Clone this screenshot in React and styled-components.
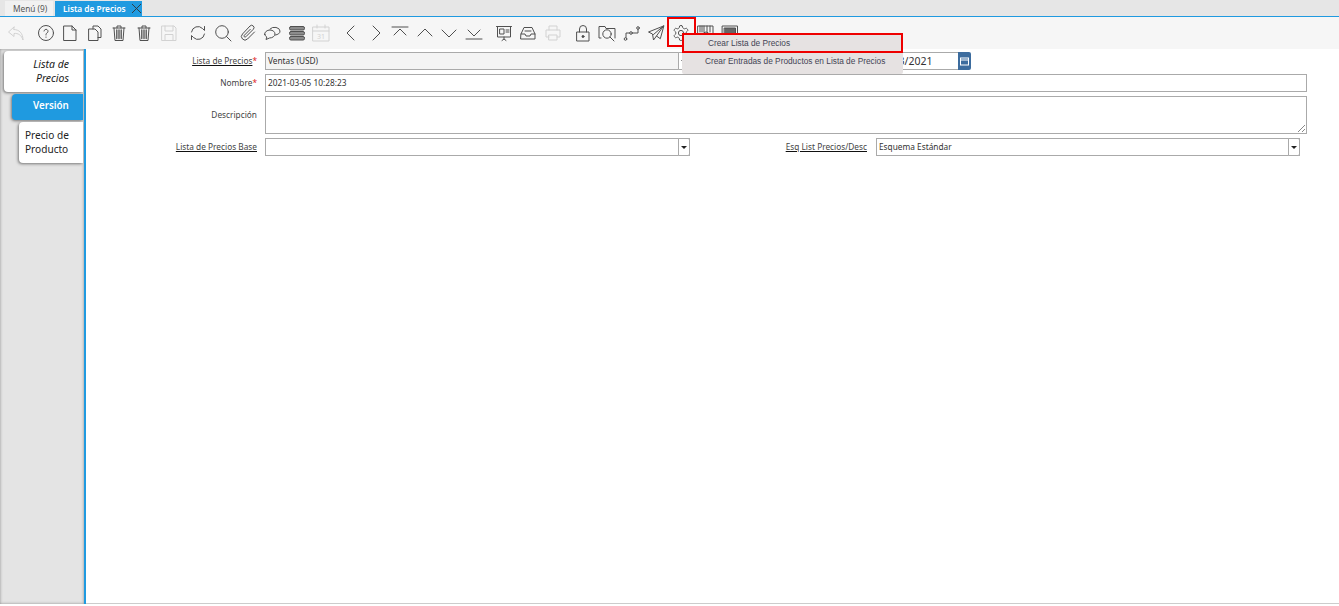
import React from "react";
import styled, { createGlobalStyle } from "styled-components";

const Global = createGlobalStyle`
  html, body { margin: 0; padding: 0; background: #fff; overflow: hidden; }
  body { font-family: "Noto Sans", "Open Sans", sans-serif; }
`;

const Page = styled.div`
  width: 1339px; height: 606px; display: flex; flex-direction: column; position: relative; overflow: hidden; background: #fff;
`;
const TabBar = styled.div`
  height: 16px; background: #e6e6e6; border-bottom: 1px solid #1f9ae0; display: flex; align-items: flex-end; padding-left: 5px; gap: 2px; flex: none;
`;
const Tab = styled.div`
  height: 15px; box-sizing: border-box; display: flex; align-items: center; font-size: 8.3px; line-height: 15px; white-space: nowrap;
  padding-left: 8px;
  width: ${p => (p.$active ? "87px" : "48px")};
  background: ${p => (p.$active ? "#1f9ae0" : "#f1f1f1")};
  color: ${p => (p.$active ? "#fff" : "#555")};
  font-weight: ${p => (p.$active ? 600 : 400)};
  justify-content: space-between;
`;
const Toolbar = styled.div`
  height: 32px; background: #f6f6f6; flex: none; display: flex; align-items: center; gap: 11.7px; padding-left: 7px;
`;
const ToolGroup = styled.div`
  display: flex; align-items: center; gap: 6.6px;
`;
const ToolIcon = styled.svg`
  width: 18px; height: 18px; flex: none; fill: none; stroke: ${p => (p.$off ? "#d2d2d2" : "#505050")}; stroke-width: 1;
  stroke-linecap: round; stroke-linejoin: round;
`;
const Body = styled.div`
  flex: 1; display: flex; min-height: 0; padding-bottom: 2px;
`;
const Side = styled.div`
  width: 84px; box-sizing: border-box; flex: none; background: #e4e4e4; box-shadow: inset 0 0 3px #8c8c8c;
  padding-top: 2px; display: flex; flex-direction: column; gap: 2px; align-items: flex-end;
`;
const SideTab = styled.div`
  box-sizing: border-box; background: ${p => (p.$on ? "#1f9ae0" : "#fff")}; color: ${p => (p.$on ? "#fff" : "#222")};
  width: ${p => p.$w}px; height: ${p => p.$h}px; border-radius: 4px 0 0 4px; line-height: 14px;
  font-size: ${p => (p.$i ? "10.5px" : p.$on ? "9.8px" : "10.1px")};
  margin-right: 1px;
  font-style: ${p => (p.$i ? "italic" : "normal")}; font-weight: ${p => (p.$on ? 600 : 400)};
  padding: ${p => p.$pad}; text-align: ${p => p.$align || "left"};
  box-shadow: -1px 1px 3px #777; flex: none;
`;
const Accent = styled.div` width: 2px; background: #1f9ae0; flex: none; `;
const Form = styled.div`
  flex: 1; display: grid; grid-template-columns: 171px 425px 186px 424px 7px; grid-auto-rows: min-content; padding: 3px 32px 0 8px;
  border-bottom: 1px solid #ccc; align-content: start;
`;
const Label = styled.div`
  font-size: 8.3px; color: #444; text-align: right; padding-right: ${p => p.$pr ?? 8}px; line-height: 17px; white-space: nowrap; align-self: center;
  margin-bottom: 5px;
  & u { text-decoration-color: #111; }
  & b { color: #d22; font-weight: 400; }
`;
const Field = styled.div`
  box-sizing: border-box; height: ${p => p.$h || 18}px; border: 1px solid #aaa; background: ${p => (p.$gray ? "#f4f4f4" : "#fff")};
  font-size: 8.3px; line-height: 16px; padding-left: 2px; color: #333; position: relative; grid-column: ${p => p.$span || "auto"};
  margin-bottom: 4px;
`;
const Arrow = styled.div`
  position: absolute; right: -1px; top: -1px; bottom: -1px; width: 12px; box-sizing: border-box; border: 1px solid #aaa; border-radius: 0 2px 2px 0; background: #fff;
  display: flex; align-items: center; justify-content: center;
  &::after { content: ""; border: 3px solid transparent; border-top: 3px solid #222; border-bottom: 0; }
`;
const Grip = styled.svg` position: absolute; right: 1px; bottom: 1px; width: 7px; height: 7px; stroke: #555; stroke-width: .7; `;
const DateRow = styled.div`
  display: flex; grid-column: 4 / span 2; height: 18px;
`;
const DateField = styled.div`
  box-sizing: border-box; width: 82px; height: 18px; border: 1px solid #aaa; border-right: 0; font-size: 10.5px; line-height: 17px; padding-left: 21.5px; color: #333; background: #fff;
`;
const CalBtn = styled.div`
  width: 13px; height: 18px; background: #3c6c9e; border-radius: 0 2px 2px 0; display: flex; align-items: center; justify-content: center;
`;
const Menu = styled.div`
  position: absolute; left: 682px; top: 33px; width: 221px; height: 41px; background: #e6e2e2; z-index: 3; border-radius: 0 0 2px 2px;
  font-family: "Liberation Sans", Arial, sans-serif;
`;
const MenuItem = styled.div`
  box-sizing: border-box; height: ${p => p.$h}px; font-size: 8.3px; color: #445; line-height: ${p => p.$h - (p.$sel ? 4 : 0)}px; padding-left: ${p => p.$pl}px; white-space: nowrap;
  border: ${p => (p.$sel ? "2px solid #ee0000" : "0")};
`;
const RedBox = styled.div`
  position: absolute; left: 667px; top: 17px; width: 29px; height: 30px; box-sizing: border-box; border: 2px solid #ee0000; z-index: 2;
`;

const I = ({ off, children }) => <ToolIcon $off={off} viewBox="0 0 18 18">{children}</ToolIcon>;
const trash = <><path d="M3 4h12M7 4V2h4v2M4 4l1 12.500h8l1-12.500" /><path d="M6.800 6v8.500M9 6v8.500M11.200 6v8.500" strokeWidth="1.300" /></>;

export default function App() {
  return (
    <Page>
      <Global />
      <TabBar>
        <Tab>Menú (9)</Tab>
        <Tab $active>Lista de Precios
          <svg width="11" height="11" viewBox="0 0 11 11" stroke="#333" strokeWidth=".9"><path d="M1 1l9 9M10 1l-9 9" /></svg>
        </Tab>
      </TabBar>
      <Toolbar>
        <I off><path d="M7 3L1.500 8 7 12.500V9.500c4-.5 7.500 1.500 9 6.500 0-7-4-10.500-9-10.500z" /></I>
        <ToolGroup>
          <I><circle cx="9" cy="9" r="7.500" /><path d="M7 7a2 2 0 1 1 3 2c-1 .6-1 1-1 2M9 13v.3" /></I>
          <I><path d="M3 2h8l4 4v10.500H3zM11 2v4h4" /></I>
          <I><path d="M7 5V2h5l3 3v8.500h-3M3 5h6l3 3v8.500H3z" /></I>
          <I>{trash}</I>
          <I>{trash}</I>
          <I off><path d="M2 2h12l2 2v12.500H2zM5 2v5h8V2M5 16.500v-6h8v6" /></I>
        </ToolGroup>
        <ToolGroup>
          <I><path d="M2.500 8a6.500 6.500 0 0 1 11-3.500L15.500 6.500V2.500M15.500 10a6.500 6.500 0 0 1-11 3.500L2.500 11.500v4" /></I>
          <I><circle cx="8" cy="8" r="6.300" /><path d="M12.500 12.500L17 17" /></I>
          <I><path d="M15.500 8l-7 7a3.500 3.500 0 0 1-5-5l7.500-8a2.300 2.300 0 0 1 3.300 3.300l-7.500 7.500a1 1 0 0 1-1.500-1.500l6-6" /></I>
          <I><path d="M7 5a5.500 4 0 0 1 10 2c0 2.500-2 3.500-4.500 4" /><path d="M1.500 10.500c0-2.500 2.500-4.500 5.500-4.500s5 2 5 4-2.500 4-5.500 4l-3.500 1.500.8-2.500c-1-.5-1.800-1.500-1.800-2.500z" /></I>
          <I><rect x="1.500" y="2.500" width="15" height="3.500" rx="1.500" fill="#8c8c8c" /><rect x="1.500" y="7.500" width="15" height="3.500" rx="1.500" fill="#8c8c8c" /><rect x="1.500" y="12.500" width="15" height="3.500" rx="1.500" fill="#8c8c8c" /></I>
          <I off><path d="M1 3h16v14H1zM1 7h16M5 1v3M13 1v3" /><text x="5" y="15" fontSize="7" fill="#d2d2d2" stroke="none">31</text></I>
        </ToolGroup>
        <ToolGroup>
          <I><path d="M12 2L5 9l7 7" /></I>
          <I><path d="M6 2l7 7-7 7" /></I>
          <I><path d="M1 3h16M3 11l6-6 6 6" /></I>
          <I><path d="M2 12l7-7 7 7" /></I>
          <I><path d="M2 6l7 7 7-7" /></I>
          <I><path d="M3 6l6 6 6-6M1 15h16" /></I>
        </ToolGroup>
        <ToolGroup>
          <I><path d="M1.500 2.500h15M2.500 2.500v10.500h13V2.500M5 5h4v5H5zM11 6h3M11 8h3M9 13v2M7 16.500l2-1.500 2 1.500" /></I>
          <I><path d="M2 10l3-6.500h8l3 6.500v5H2zM2 10h4l1 2h4l1-2h4M6 7h6" /></I>
          <I off><path d="M5 6V2h8v4M5 13H2V6h14v7h-3M5 11h8v5H5z" /></I>
        </ToolGroup>
        <ToolGroup>
          <I><path d="M3 8h12v9H3zM5.500 8V5a3.500 3.500 0 0 1 7 0v3" /><circle cx="9" cy="12.500" r="1" fill="#333" /></I>
          <I><path d="M3 14H1V2.500h6l1 2h9V14" /><circle cx="9" cy="10" r="4.200" /><path d="M12 13l4 4" /></I>
          <I><circle cx="2.500" cy="15" r="1.300" /><circle cx="8" cy="9" r="1.300" /><circle cx="15" cy="4" r="1.300" /><path d="M3 13.500V9h3.500M9.500 9H15V5.500" /></I>
          <I><path d="M16.500 2L1.500 8l4 2 1 6 3-4 3.500 2.500zM16.500 2L6.500 10.500M16.500 2L9.500 12" /></I>
          <I><g transform="scale(.75)" strokeWidth="1.300"><path d="M12.220 2h-.44a2 2 0 0 0-2 2v.18a2 2 0 0 1-1 1.730l-.43.250a2 2 0 0 1-2 0l-.15-.08a2 2 0 0 0-2.730.730l-.22.380a2 2 0 0 0 .730 2.730l.15.100a2 2 0 0 1 1 1.720v.510a2 2 0 0 1-1 1.740l-.15.090a2 2 0 0 0-.730 2.730l.22.380a2 2 0 0 0 2.730.730l.15-.08a2 2 0 0 1 2 0l.43.250a2 2 0 0 1 1 1.730V20a2 2 0 0 0 2 2h.44a2 2 0 0 0 2-2v-.18a2 2 0 0 1 1-1.730l.43-.25a2 2 0 0 1 2 0l.15.080a2 2 0 0 0 2.730-.730l.22-.390a2 2 0 0 0-.730-2.730l-.15-.08a2 2 0 0 1-1-1.740v-.5a2 2 0 0 1 1-1.740l.15-.09a2 2 0 0 0 .730-2.730l-.22-.38a2 2 0 0 0-2.730-.73l-.15.08a2 2 0 0 1-2 0l-.43-.25a2 2 0 0 1-1-1.730V4a2 2 0 0 0-2-2z" /><circle cx="12" cy="12" r="3.500" /></g></I>
          <I><path d="M1 2h15v14H1zM3 2v6M5 2v6M7 2v6M10 2v6M13 2v6" /><circle cx="9" cy="11" r="3" /></I>
          <I><rect x="1.500" y="2" width="15" height="14" /><rect x="3.500" y="4" width="11" height="8" fill="#666" /></I>
        </ToolGroup>
      </Toolbar>
      <Body>
        <Side>
          <SideTab $i $w={79} $h={41} $pad="6px 14px 0 0" $align="right">Lista de<br />Precios</SideTab>
          <SideTab $on $w={71} $h={26} $pad="5px 0 0 21px">Versión</SideTab>
          <SideTab $w={64} $h={41} $pad="6px 0 0 6px">Precio de<br />Producto</SideTab>
        </Side>
        <Accent />
        <Form>
          <Label><u>Lista de Precios</u><b>*</b></Label>
          <Field $gray>Ventas (USD)<Arrow /></Field>
          <div />
          <DateRow>
            <DateField>3/2021</DateField>
            <CalBtn>
              <svg width="9" height="9" viewBox="0 0 9 9" fill="none" stroke="#fff" strokeWidth="1"><rect x=".5" y="1" width="8" height="7" /><path d="M.5 3h8" /></svg>
            </CalBtn>
          </DateRow>
          <Label><span>Nombre</span><b>*</b></Label>
          <Field $span="2 / span 4">2021-03-05 10:28:23</Field>
          <Label>Descripción</Label>
          <Field $span="2 / span 4" $h={38}>
            <Grip viewBox="0 0 7 7"><path d="M0 7L7 0M4 7l3-3" /></Grip>
          </Field>
          <Label><u>Lista de Precios Base</u></Label>
          <Field>&nbsp;<Arrow /></Field>
          <Label $pr={9}><u>Esq List Precios/Desc</u></Label>
          <Field>Esquema Estándar<Arrow /></Field>
        </Form>
      </Body>
      <RedBox />
      <Menu>
        <MenuItem $sel $h={20} $pl={24}>Crear Lista de Precios</MenuItem>
        <MenuItem $h={17} $pl={23}>Crear Entradas de Productos en Lista de Precios</MenuItem>
      </Menu>
    </Page>
  );
}
